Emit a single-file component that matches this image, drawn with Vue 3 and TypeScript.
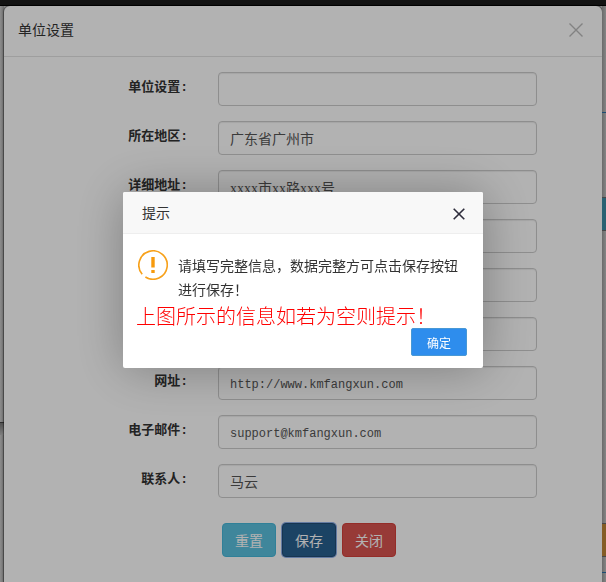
<script setup lang="ts">
import { ref } from 'vue'

interface Field {
  id: string
  label: string
  value: string
  face?: 'mono' | 'serif'
}

const fields = ref<Field[]>([
  { id: 'unit', label: '单位设置:', value: '' },
  { id: 'region', label: '所在地区:', value: '广东省广州市' },
  { id: 'address', label: '详细地址:', value: 'xxxx市xx路xxx号', face: 'serif' },
  { id: 'postcode', label: '邮政编码:', value: '' },
  { id: 'phone', label: '联系电话:', value: '' },
  { id: 'fax', label: '传真:', value: '' },
  { id: 'site', label: '网址:', value: 'http://www.kmfangxun.com', face: 'mono' },
  { id: 'email', label: '电子邮件:', value: 'support@kmfangxun.com', face: 'mono' },
  { id: 'contact', label: '联系人:', value: '马云' },
])

const alertOpen = ref(true)
</script>

<template>
  <div class="page">
    <div class="navbar"></div>
    <div class="stage">
      <div class="strip left" aria-hidden="true">
        <span class="panel"></span>
        <span class="panel-shadow"></span>
      </div>
      <section class="modal">
        <header class="modal-header">
          <h1>单位设置</h1>
          <button type="button" class="close" aria-label="关闭">
            <svg viewBox="0 0 14 14" width="14" height="14"><path d="M.5 .5 13.500 13.500M13.500 .5 .5 13.500" /></svg>
          </button>
        </header>
        <form class="modal-body" @submit.prevent="alertOpen = true">
          <div v-for="f in fields" :key="f.id" class="row">
            <label :for="f.id">{{ f.label }}</label>
            <input :id="f.id" v-model="f.value" type="text" :class="f.face" />
          </div>
          <div class="actions">
            <button type="reset" class="btn info">重置</button>
            <button type="submit" class="btn primary">保存</button>
            <button type="button" class="btn danger">关闭</button>
          </div>
        </form>
      </section>
      <div class="strip right" aria-hidden="true">
        <span class="gap-a"></span>
        <span class="tab"></span>
        <span class="chip-info"></span>
        <span class="gap-b"></span>
        <span class="chip-warn"></span>
        <span class="gap-c"></span>
      </div>
    </div>

    <div v-if="alertOpen" class="backdrop">
      <div class="dialog" role="alertdialog" aria-labelledby="tip-title">
        <header class="dialog-header">
          <h2 id="tip-title">提示</h2>
          <button type="button" class="dialog-close" aria-label="关闭" @click="alertOpen = false">
            <svg viewBox="0 0 12 12" width="12" height="12"><path d="M.7 .7 11.300 11.300M11.300 .7 .7 11.300" /></svg>
          </button>
        </header>
        <div class="dialog-body">
          <svg class="warn" viewBox="0 0 30 30" width="30" height="30">
            <path class="ring" d="M4.200 24.200A14.200 14.200 0 1 1 7.400 27" />
            <path class="mark" d="M13.300 7h3.400v10.500h-3.400zM13.300 20h3.400v3h-3.400z" />
          </svg>
          <p>请填写完整信息，数据完整方可点击保存按钮进行保存！</p>
        </div>
        <p class="note">上图所示的信息如若为空则提示！</p>
        <footer>
          <button type="button" class="ok" @click="alertOpen = false">确定</button>
        </footer>
      </div>
    </div>
  </div>
</template>

<style>
body {
  margin: 0;
}
</style>

<style scoped>
* {
  box-sizing: border-box;
}
.page {
  display: flex;
  flex-direction: column;
  min-height: 100vh;
  background: #c8c8c8;
  color: #333;
  font: 14px/20px "Liberation Sans", "Noto Sans CJK SC", sans-serif;
}
h1,
h2,
p {
  margin: 0;
  font-size: 14px;
  font-weight: 400;
}
button {
  font-family: inherit;
  cursor: pointer;
}
.navbar {
  height: 6px;
  background: #1a1a1a;
  border-bottom: 1px solid #000;
}
.stage {
  display: flex;
  flex: 1;
}
.strip {
  display: flex;
  flex-direction: column;
  flex: 0 0 4px;
}
.left {
  background: linear-gradient(to right, #c9c9c9, #a0a0a0);
}
.left .panel {
  height: 417px;
  border-bottom: 1px solid #444;
}
.left .panel-shadow {
  height: 12px;
  background: linear-gradient(#777, #b4b4b4);
}
.right {
  background: linear-gradient(to right, #999, #c0c0c0);
}
.gap-a {
  height: 107px;
  border-bottom: 1px solid #2b6ea5;
}
.tab {
  height: 84px;
}
.chip-info {
  height: 34px;
  background: #3c8ba4;
  border-top: 1px solid #666;
  border-bottom: 1px solid #666;
}
.gap-b {
  height: 292px;
}
.chip-warn {
  height: 34px;
  background: #bd8436;
  border-top: 1px solid #666;
  border-bottom: 1px solid #666;
}
.gap-c {
  height: 16px;
  border-bottom: 1px solid #2b6ea5;
}
.modal {
  flex: 1;
  min-width: 0;
  background: #fff;
  border-radius: 6px 6px 0 0;
  box-shadow: 0 0 1px 1px rgba(0, 0, 0, 0.4);
}
.modal-header {
  display: flex;
  align-items: center;
  justify-content: space-between;
  height: 51px;
  padding: 0 19px 2px 14px;
  border-bottom: 1px solid #e2e2e2;
}
.close,
.dialog-close {
  display: flex;
  padding: 0;
  border: 0;
  background: none;
}
.close path {
  fill: none;
  stroke: #bbb;
  stroke-width: 1.4;
}
.modal-body {
  padding: 15px 65px 25px 0;
}
.row {
  display: grid;
  grid-template-columns: 184fr 319fr;
  column-gap: 30px;
  margin-bottom: 15px;
}
label {
  padding-top: 6px;
  font-family: "Liberation Mono", "Noto Sans CJK SC", monospace;
  font-size: 13px;
  font-weight: 700;
  text-align: right;
}
input {
  width: 100%;
  min-width: 0;
  height: 34px;
  padding: 6px 11px;
  border: 1px solid #ccc;
  border-radius: 4px;
  background: #fff;
  box-shadow: inset 0 1px 1px rgba(0, 0, 0, 0.075);
  color: #555;
  font: 14px/20px "Liberation Sans", "Noto Sans CJK SC", sans-serif;
}
.mono {
  padding-top: 8px;
  padding-bottom: 4px;
  font-family: "Liberation Mono", "Noto Sans CJK SC", monospace;
  font-size: 12px;
}
.serif {
  font-family: "Liberation Serif", "Noto Sans CJK SC", serif;
}
.actions {
  display: flex;
  justify-content: center;
  gap: 6px;
  padding: 10px 0 0 77px;
}
.btn {
  height: 34px;
  padding: 0 12px;
  border: 1px solid;
  border-radius: 4px;
  color: #fff;
  font-size: 14px;
}
.info {
  background: #5bc0de;
  border-color: #46b8da;
}
.primary {
  background: #286090;
  border-color: #204d74;
  box-shadow: 0 0 0 1px #8fb0e8;
}
.danger {
  background: #d9534f;
  border-color: #d43f3a;
}
.backdrop {
  position: fixed;
  inset: 0;
  display: flex;
  align-items: flex-start;
  justify-content: center;
  padding: 33vh 0 0;
  background: rgba(0, 0, 0, 0.3);
}
.dialog {
  width: 360px;
  border-radius: 2px;
  background: #fff;
  box-shadow: 1px 1px 50px rgba(0, 0, 0, 0.3);
}
.dialog-header {
  display: flex;
  align-items: center;
  justify-content: space-between;
  height: 42px;
  padding: 0 18px 0 19px;
  border-bottom: 1px solid #eee;
  border-radius: 2px 2px 0 0;
  background: #f8f8f8;
}
.dialog-header h2 {
  padding-top: 1px;
}
.dialog-close {
  padding-top: 2px;
}
.dialog-close path {
  fill: none;
  stroke: #2d2c3b;
  stroke-width: 1.6;
}
.dialog-body {
  display: flex;
  gap: 10px;
  padding: 16px 20px 0 15px;
  line-height: 24px;
}
.dialog-body p {
  padding-top: 4px;
}
.warn {
  flex: none;
}
.ring {
  fill: none;
  stroke: #f7a11b;
  stroke-width: 1.6;
}
.mark {
  fill: #f79a0c;
}
.note {
  padding: 5px 0 1px 13px;
  color: #f00;
  font-family: "Liberation Serif", "Noto Sans CJK SC", serif;
  font-size: 20px;
  font-weight: 300;
  line-height: 20px;
  white-space: nowrap;
}
footer {
  display: flex;
  justify-content: flex-end;
  padding: 0 16px 12px;
}
.ok {
  height: 28px;
  padding: 0 15px;
  border: 1px solid #4898d5;
  border-radius: 2px;
  background: #2e8ded;
  color: #fff;
  font-size: 12px;
}
</style>
